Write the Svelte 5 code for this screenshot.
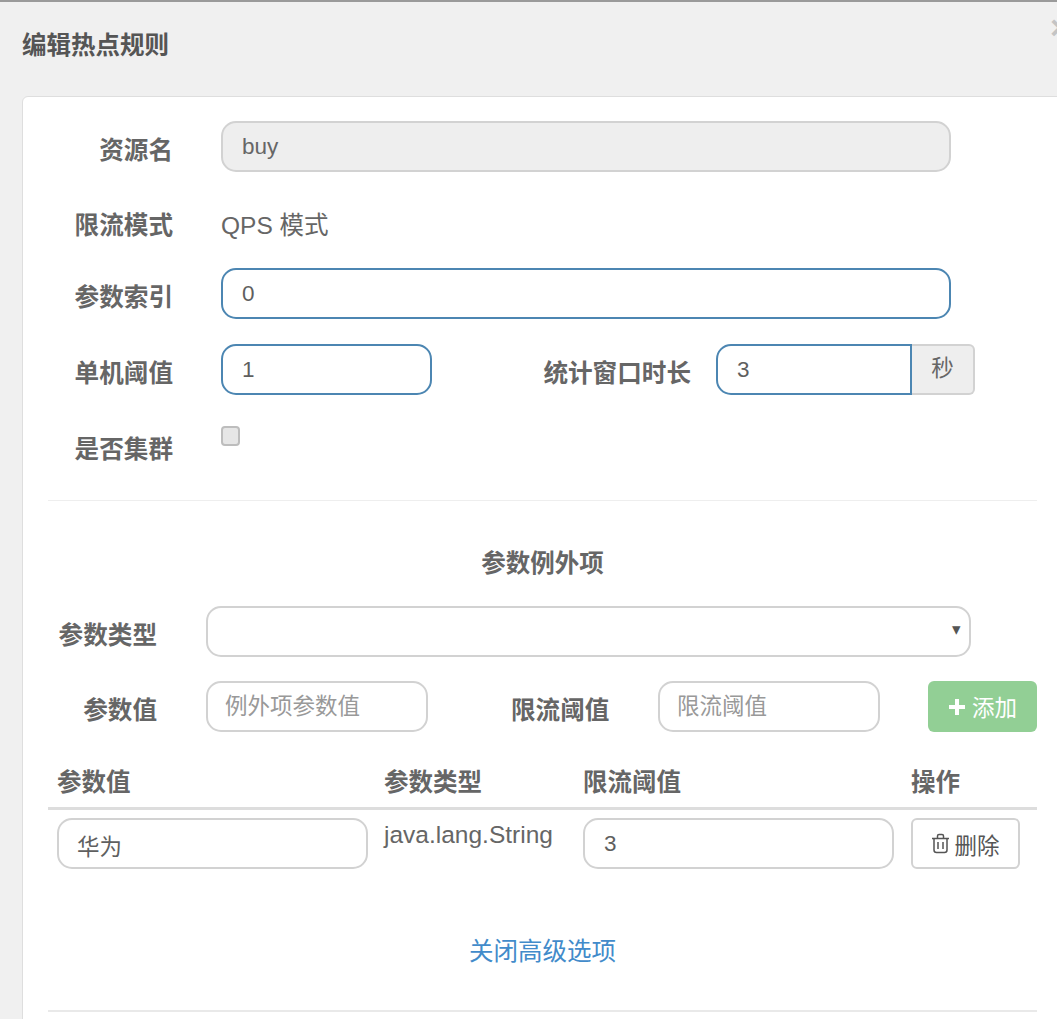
<script>
  const heads = ['参数值', '参数类型', '限流阈值', '操作'];
</script>

<div class="modal">
  <header class="head">
    <h3>编辑热点规则</h3>
    <span class="close">×</span>
  </header>
  <main class="card">
    <div class="inner">
      <div class="row">
        <label class="lab w1">资源名</label>
        <input class="ctl disabled full" value="buy" disabled />
      </div>
      <div class="row r2">
        <label class="lab w1">限流模式</label>
        <span class="static">QPS 模式</span>
      </div>
      <div class="row">
        <label class="lab w1">参数索引</label>
        <input class="ctl focus full" value="0" />
      </div>
      <div class="row">
        <label class="lab w1">单机阈值</label>
        <input class="ctl focus small" value="1" />
        <label class="lab w2">统计窗口时长</label>
        <div class="group">
          <input class="ctl focus gi" value="3" />
          <span class="addon">秒</span>
        </div>
      </div>
      <div class="row r5">
        <label class="lab w1">是否集群</label>
        <input type="checkbox" class="chk" />
      </div>

      <hr class="sep" />

      <div class="title">参数例外项</div>

      <div class="row tight">
        <label class="lab w3">参数类型</label>
        <div class="selwrap">
          <select class="ctl sel"><option></option></select>
          <span class="arrow">▾</span>
        </div>
      </div>
      <div class="row tight2">
        <label class="lab w3">参数值</label>
        <input class="ctl mid" placeholder="例外项参数值" />
        <label class="lab w4">限流阈值</label>
        <input class="ctl mid" placeholder="限流阈值" />
        <button class="btn add">
          <svg width="18" height="18" viewBox="0 0 18 18"><path d="M7 1h4v6h6v4h-6v6H7v-6H1V7h6z" fill="#fff" /></svg>
          <span class="btxt">添加</span>
        </button>
      </div>

      <div class="thead">
        {#each heads as h}<div>{h}</div>{/each}
      </div>
      <div class="trow">
        <input class="ctl cell cjk" value="华为" />
        <div class="type">java.lang.String</div>
        <input class="ctl cell" value="3" />
        <button class="btn del">
          <svg width="19" height="21" viewBox="0 0 19 21" fill="none" stroke="#555" stroke-width="1.5"><path d="M1 5.500h17M6.500 5.500V3q0-1.500 1.500-1.500h3q1.500 0 1.500 1.500v2.500M3 5.500v11.500q0 2.500 2.500 2.500h8q2.500 0 2.500-2.500V5.500M7 9v7M12 9v7" /></svg>
          <span>删除</span>
        </button>
      </div>

      <div class="more"><a href="#top">关闭高级选项</a></div>
      <hr class="sep2" />
    </div>
  </main>
</div>

<style>
  :global(html), :global(body) {
    margin: 0;
    height: 100%;
    overflow: hidden;
    background: #f0f0f0;
  }
  .modal {
    height: 1019px;
    box-sizing: border-box;
    overflow: hidden;
    position: relative;
    background: #f0f0f0;
    border-top: 2px solid #9a9a9a;
    font-family: "Liberation Sans", "Noto Sans CJK SC", sans-serif;
    color: #676a6c;
  }
  .head {
    height: 94px;
    box-sizing: border-box;
    padding: 28px 0 0 22px;
  }
  h3 {
    margin: 0;
    font-size: 24.5px;
    line-height: 32px;
    font-weight: 700;
    color: #555;
  }
  .close {
    position: absolute;
    left: 1050px;
    top: 8px;
    font-size: 34px;
    line-height: 34px;
    font-weight: 700;
    color: #c4c4c4;
  }
  .card {
    margin-left: 22px;
    width: 1060px;
    height: 950px;
    box-sizing: border-box;
    background: #fff;
    border: 1px solid #dedede;
    border-radius: 6px 0 0 0;
    padding: 24px 0 0 25px;
  }
  .inner { width: 989px; }
  .row {
    display: flex;
    align-items: flex-start;
    height: 56px;
    margin-bottom: 20px;
  }
  .r2 { margin-bottom: 15px; }
  .r2 .lab, .r2 .static { line-height: 58px; }
  .r5 { margin-bottom: 24px; }
  .lab {
    flex: none;
    box-sizing: border-box;
    text-align: right;
    font-size: 24.6px;
    font-weight: 700;
    line-height: 60px;
    white-space: nowrap;
    color: #666;
  }
  .w1 { width: 125px; margin-right: 48px; }
  .w2 { width: 148px; margin-left: 111px; margin-right: 25px; }
  .w3 { width: 109px; margin-right: 49px; }
  .w4 { width: 98px; margin-left: 83px; margin-right: 49px; }
  .ctl {
    flex: none;
    box-sizing: border-box;
    height: 51px;
    margin: 0;
    padding: 0 19px;
    font: 22.5px "Liberation Sans", "Noto Sans CJK SC", sans-serif;
    color: #5f5f5f;
    background: #fff;
    border: 2px solid #d2d2d2;
    border-radius: 15px;
    outline: none;
  }
  .ctl::placeholder { color: #999; opacity: 1; }
  .focus { border-color: #4c86b2; }
  .disabled { background: #eee; color: #666; opacity: 1; -webkit-text-fill-color: #666; }
  .full { width: 730px; }
  .small { width: 211px; }
  .static {
    font-size: 24.5px;
    color: #666;
  }
  .group { display: flex; }
  .gi {
    width: 196px;
    border-radius: 15px 0 0 15px;
  }
  .addon {
    box-sizing: border-box;
    width: 63px;
    height: 51px;
    line-height: 45px;
    text-align: center;
    font-size: 22.5px;
    color: #666;
    background: #eee;
    border: 2px solid #d2d2d2;
    border-left: 0;
    border-radius: 0 6px 6px 0;
  }
  .chk {
    appearance: none;
    box-sizing: border-box;
    width: 19px;
    height: 20px;
    margin: 6px 0 0;
    background: #e6e6e6;
    border: 2px solid #bdbdbd;
    border-radius: 4px;
  }
  .sep {
    margin: 0 0 46px;
    height: 1px;
    border: 0;
    background: #eee;
  }
  .title {
    text-align: center;
    font-size: 24.5px;
    font-weight: 700;
    line-height: 34px;
    color: #666;
    margin-bottom: 25px;
  }
  .tight { margin-bottom: 19px; }
  .tight2 { margin-bottom: 21px; }
  .selwrap { position: relative; }
  .sel {
    appearance: none;
    width: 765px;
    display: block;
  }
  .arrow {
    position: absolute;
    right: 10px;
    top: 10px;
    font-size: 17px;
    line-height: 28px;
    color: #555;
  }
  .mid { width: 222px; padding-left: 17px; }
  .btn {
    flex: none;
    box-sizing: border-box;
    height: 51px;
    display: flex;
    align-items: center;
    justify-content: center;
    gap: 6px;
    padding: 0;
    font: 22.5px "Liberation Sans", "Noto Sans CJK SC", sans-serif;
    border-radius: 6px;
  }
  .add {
    width: 109px;
    margin-left: 48px;
    color: #fff;
    background: #92cf95;
    border: 0;
  }
  .btxt { position: relative; top: -1px; }
  .thead, .trow {
    display: grid;
    grid-template-columns: 327px 199px 328px 109px;
    padding-left: 9px;
  }
  .thead {
    height: 52px;
    box-sizing: border-box;
    border-bottom: 3px solid #ddd;
    font-size: 24.5px;
    font-weight: 700;
    line-height: 30px;
    color: #666;
    padding-top: 10px;
  }
  .trow { margin-top: 8px; align-items: start; }
  .cell { width: 311px; }
  .cjk { padding: 2px 18px 0; }
  .type {
    font-size: 24.5px;
    line-height: 34px;
    color: #666;
  }
  .del {
    width: 109px;
    color: #555;
    background: #fff;
    border: 2px solid #d2d2d2;
    gap: 4px;
  }
  .more {
    margin-top: 63px;
    text-align: center;
    font-size: 24.5px;
    line-height: 40px;
  }
  .more a { color: #428bca; text-decoration: none; }
  .sep2 {
    margin: 38px 0 0;
    height: 2px;
    border: 0;
    background: #e9e9e9;
  }
</style>
